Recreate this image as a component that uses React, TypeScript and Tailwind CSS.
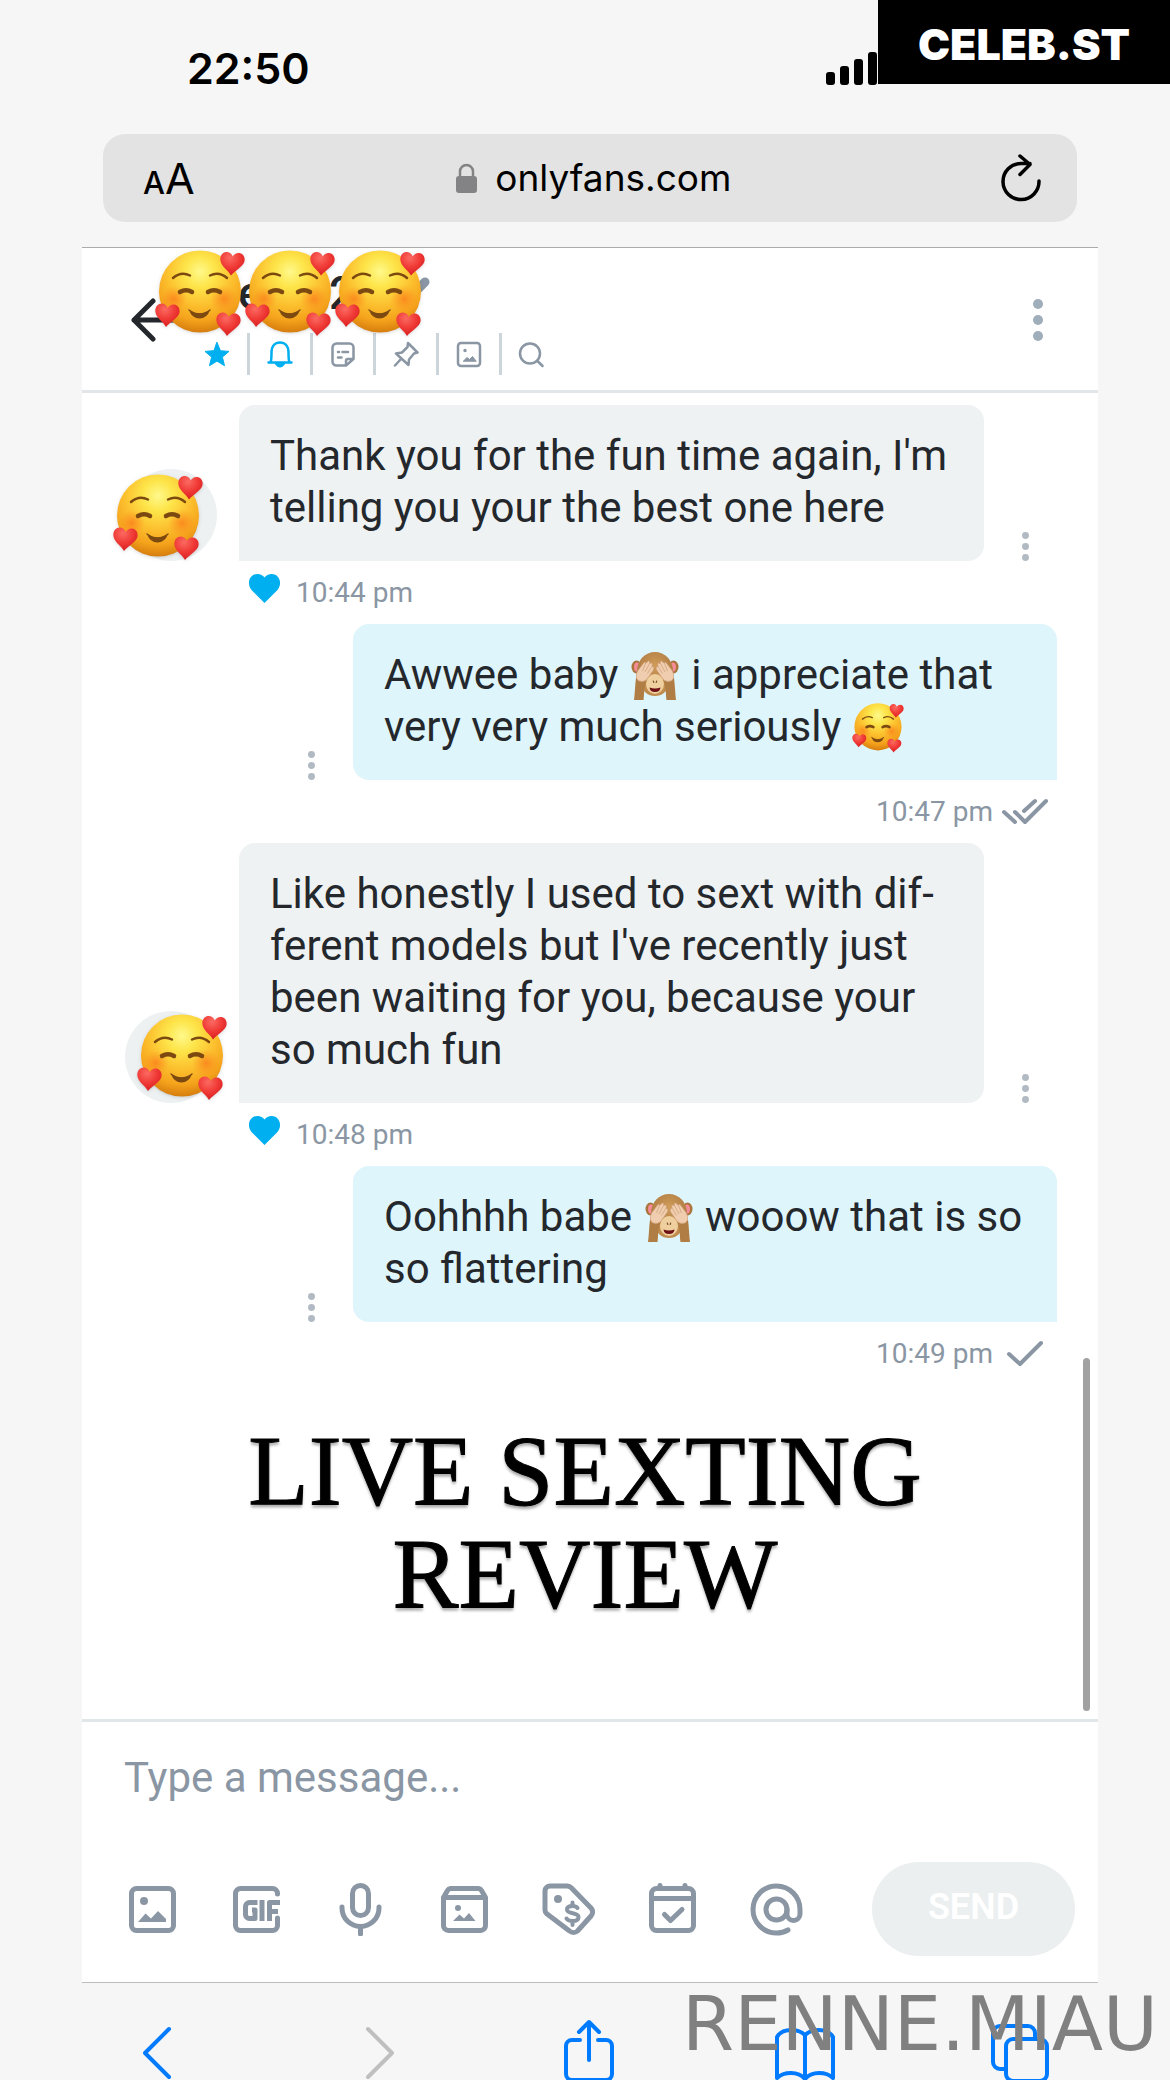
import type { ReactNode } from 'react';

type IconProps = { className?: string };

// === SHARED EMOJI GRADIENTS ===
function EmojiDefs() {
    return (
        <svg className="absolute h-0 w-0" aria-hidden="true">
            <defs>
                <radialGradient id="face" cx="50%" cy="26%" r="74%">
                    <stop offset="0%" stopColor="#fff98c" />
                    <stop offset="25%" stopColor="#fde54a" />
                    <stop offset="55%" stopColor="#fcc02e" />
                    <stop offset="80%" stopColor="#f5a31c" />
                    <stop offset="100%" stopColor="#d67d0e" />
                </radialGradient>
                <radialGradient id="blush">
                    <stop offset="0%" stopColor="#fb7f1c" stopOpacity="0.8" />
                    <stop offset="100%" stopColor="#fb8f20" stopOpacity="0" />
                </radialGradient>
                <radialGradient id="heart" cx="40%" cy="25%" r="75%">
                    <stop offset="0%" stopColor="#fb6a62" />
                    <stop offset="55%" stopColor="#f03a36" />
                    <stop offset="100%" stopColor="#d71f22" />
                </radialGradient>
                <radialGradient id="fur" cx="50%" cy="35%" r="65%">
                    <stop offset="0%" stopColor="#cf9c58" />
                    <stop offset="100%" stopColor="#a87440" />
                </radialGradient>
            </defs>
        </svg>
    );
}

const HEART = 'M11 24.500C8 19 .5 15 .3 8.500C.2 3.500 3.500.7 7.200.9C10 1.100 11.900 3 12.700 5.500C14.200 3 16.500 1.700 19.200 2C23 2.500 25.200 6 24.500 10C23.500 15.500 15.500 19 11 24.500Z';

function LoveFace({ className }: IconProps) {
    return (
        <svg viewBox="0 0 90 87" className={className} role="img" aria-label="smiling face with hearts">
            <circle cx="45" cy="41.500" r="41" fill="url(#face)" />
            <circle cx="19" cy="49" r="13" fill="url(#blush)" />
            <circle cx="69" cy="49" r="14" fill="url(#blush)" />
            <g fill="none" stroke="#7c4a10" strokeLinecap="round">
                <path d="M18 28Q26 21 35 25.500" strokeWidth="2.500" />
                <path d="M55 25.500Q64 21 72 28" strokeWidth="2.500" />
                <path d="M25 42Q31 38.500 37 42" strokeWidth="4.500" />
                <path d="M53 42Q59 38.500 65 42" strokeWidth="4.500" />
                <path d="M34 60Q45 68 55 60" strokeWidth="1.500" />
            </g>
            <path d="M34 60Q45 67 55 60Q52 68.500 44.500 68.500Q37 68.500 34 60Z" fill="#7c4a10" />
            <path d={HEART} fill="url(#heart)" transform="translate(65 1)" />
            <path d={HEART} fill="url(#heart)" transform="translate(0 52.500)" />
            <path d={HEART} fill="url(#heart)" transform="translate(61 61.500)" />
        </svg>
    );
}

function Monkey({ className }: IconProps) {
    return (
        <svg viewBox="0 0 48 50" className={className} role="img" aria-label="see-no-evil monkey">
            <ellipse cx="5.500" cy="16" rx="5" ry="6.500" fill="#a9743a" />
            <ellipse cx="6" cy="16" rx="3" ry="4.500" fill="#f58c98" />
            <ellipse cx="42.500" cy="16" rx="5" ry="6.500" fill="#a9743a" />
            <ellipse cx="42" cy="16" rx="3" ry="4.500" fill="#f58c98" />
            <ellipse cx="24" cy="20" rx="18" ry="19" fill="url(#fur)" />
            <ellipse cx="24" cy="34" rx="13" ry="11" fill="#c08c4d" />
            <ellipse cx="24" cy="33" rx="9" ry="10" fill="#efcf9e" />
            <path d="M18.500 36.500Q24 38.500 29.500 36.500Q29 41 24 41Q19 41 18.500 36.500Z" fill="#6e1216" />
            <path d="M22.300 30l.5 1.500M25.700 30l-.5 1.500" stroke="#7a542c" strokeWidth="1.200" strokeLinecap="round" />
            <path d="M3 49C4 41 4 34 5 27L16 28C12.500 36 13.500 43 12.500 49Z" fill="#b07e45" />
            <path d="M45 49C44 41 44 34 43 27L32 28C35.500 36 34.500 43 35.500 49Z" fill="#b07e45" />
            <g fill="#efcdae" stroke="#cf9f78" strokeWidth="0.700" strokeLinejoin="round">
                <path d="M5.500 27C5 22 6.500 20 8.500 17.500L13 11.500Q14.500 10.500 14.500 12.500L17.500 10Q19.500 9.500 18.500 12.500L20.500 12Q22 12.500 21 15L22.500 16Q23.500 17 22 19.500L17.500 26Q15 30.500 11 30.500Q6.500 30.500 5.500 27Z" />
                <path d="M42.500 27C43 22 41.500 20 39.500 17.500L35 11.500Q33.500 10.500 33.500 12.500L30.500 10Q28.500 9.500 29.500 12.500L27.500 12Q26 12.500 27 15L25.500 16Q24.500 17 26 19.500L30.500 26Q33 30.500 37 30.500Q41.500 30.500 42.500 27Z" />
                <path d="M14.500 12.500L11.500 20M18.500 12.500L14 21M21 15L16.500 22.500M33.500 12.500L36.500 20M29.500 12.500L34 21M27 15L31.500 22.500" fill="none" />
            </g>
        </svg>
    );
}

// === GENERIC ICONS ===
function Dots({ className }: IconProps) {
    return (
        <svg viewBox="0 0 10 42" fill="currentColor" className={className} aria-hidden="true">
            <circle cx="5" cy="5" r="5" />
            <circle cx="5" cy="21" r="5" />
            <circle cx="5" cy="37" r="5" />
        </svg>
    );
}

function LineIcon({ box = '0 0 24 24', width = 2, className, children }: { box?: string; width?: number; className?: string; children: ReactNode }) {
    return (
        <svg
            viewBox={box}
            fill="none"
            stroke="currentColor"
            strokeWidth={width}
            strokeLinecap="round"
            strokeLinejoin="round"
            className={className}
            aria-hidden="true"
        >
            {children}
        </svg>
    );
}

const headerActions = [
    {
        label: 'Favourite',
        active: true,
        icon: <path d="M13 1.500l3.400 8.200 8.600.7-6.600 5.700 2.100 8.600L13 20.100 5.500 24.700l2.100-8.600L1 10.400l8.600-.7z" fill="currentColor" strokeWidth="1" />,
    },
    {
        label: 'Notifications',
        active: true,
        icon: <><path d="M1.500 21.500h23M3.500 21.500c1-2 1-5 1-10C4.500 5 8 1.500 13 1.500s8.500 3.500 8.500 10c0 5 0 8 1 10" /><path d="M9 22.500Q13 28 17 22.500z" /></>,
    },
    {
        label: 'Notes',
        active: false,
        icon: <><path d="M16 24.500H6.500a4 4 0 0 1-4-4v-14a4 4 0 0 1 4-4h13a4 4 0 0 1 4 4V18zM16 24.500V20a2 2 0 0 1 2-2h5.500" /><path d="M8 11h1M12.500 11h5.500M8 16.500h3.500" /></>,
    },
    {
        label: 'Pin',
        active: false,
        icon: <path d="M15 2L24.500 11.500 21 12.500 16 18.500 15.500 24 3 12.500 9 11.500 14.500 6zM8 18L2 24.500" />,
    },
    {
        label: 'Media',
        active: false,
        icon: <><rect x="2" y="2" width="22" height="23" rx="3" /><circle cx="9" cy="9.500" r="1" fill="currentColor" strokeWidth="1.500" /><path d="M7.500 20l3.500-3.500 2.500 2 3-3 3.500 4.500z" fill="currentColor" strokeWidth="1" /></>,
    },
    {
        label: 'Search',
        active: false,
        icon: <><circle cx="12" cy="12.500" r="10" /><path d="M19.500 20l5 5" /></>,
    },
];

const composerActions = [
    {
        label: 'Add image',
        icon: <><rect x="5.500" y="5.500" width="42" height="42" rx="5" /><circle cx="18" cy="18" r="4" fill="currentColor" stroke="none" /><path d="M12 39l7.500-8.500 5.500 5 7-7.500 8 8v3z" fill="currentColor" stroke="none" /></>,
    },
    {
        label: 'Add GIF',
        icon: <><path d="M47.500 11v-.5a5 5 0 0 0-5-5h-32a5 5 0 0 0-5 5v32a5 5 0 0 0 5 5h32a5 5 0 0 0 5-5V35" /><path d="M27.500 19.500h-8a4 4 0 0 0-4 4v8a4 4 0 0 0 4 4H25V27h-3M32 17v21M50 19.500H39.500V38M39.500 28.500H48" strokeWidth="5" strokeLinecap="butt" /></>,
    },
    {
        label: 'Record voice',
        icon: <><rect x="18.500" y="2.500" width="16" height="30" rx="8" /><path d="M8 24v1a18.500 18.500 0 0 0 37 0v-1M26.500 43.500V51" /></>,
    },
    {
        label: 'Add from vault',
        icon: <><path d="M5.500 14.500l4-7a4 4 0 0 1 3-2h28a4 4 0 0 1 3 2l4 7V42a5 5 0 0 1-5 5.500h-32a5 5 0 0 1-5-5.500zM5.500 14.500h42" /><circle cx="20" cy="25" r="3" fill="currentColor" stroke="none" /><path d="M15 38l6.500-6.500 4.500 4 5-5.500 6.500 8z" fill="currentColor" stroke="none" /></>,
    },
    {
        label: 'Set price',
        icon: <><path d="M3 7.500A5 5 0 0 1 8 3h17a6 6 0 0 1 4 1.500L49 25a6 6 0 0 1 0 8L35.500 48a6 6 0 0 1-8 0L4.500 30.500A5 5 0 0 1 3 27z" /><circle cx="16" cy="16" r="4" fill="currentColor" stroke="none" /><path d="M35.500 25q-1.500-2-5-2c-4 0-5.500 1.500-5.500 3.500 0 5 11.500 2.500 11.500 7.500 0 2.500-2 4-6 4q-4.500 0-6-2.500M30.500 19.500V23M30.500 38.500V42" strokeWidth="4" /></>,
    },
    {
        label: 'Schedule',
        icon: <><rect x="5.500" y="5.500" width="42" height="42" rx="5" /><path d="M5.500 15.500h42M14 2.500V5M39 2.500V5" /><path d="M18.500 31.500l6 6L36 26.500" /></>,
    },
    {
        label: 'Mention',
        icon: <><circle cx="26.500" cy="26.500" r="10.500" /><path d="M38 47Q33 50 26.500 50A23.500 23.500 0 1 1 50 26.500V31a6.500 6.500 0 0 1-13 0v-4.500" /></>,
    },
];

// === MESSAGES ===
function Text({ children }: { children: ReactNode }) {
    return <p className="text-[42px] leading-[52px] text-[#24282c]">{children}</p>;
}

const emojiInline = '-my-2 inline-block h-[50px] w-[52px] align-[-4px]';

function Incoming({ time, avatar, children }: { time: string; avatar: string; children: ReactNode }) {
    return (
        <article className="pl-[43px]">
            <div className="flex items-end">
                <div className="relative mr-[22px] h-[92px] w-[92px] shrink-0 rounded-full bg-[#edf1f2]">
                    <LoveFace className={avatar} />
                </div>
                <div className="flex-1 rounded-2xl rounded-bl-none bg-[#eef2f3] pt-[25px] pr-[30px] pb-[27px] pl-[31px]">
                    <Text>{children}</Text>
                </div>
                <button aria-label="Message options" className="flex w-[114px] justify-center pr-[31px]">
                    <Dots className="h-[29px] w-[7px] text-[#b1bac3]" />
                </button>
            </div>
            <div className="flex h-[63px] items-center gap-4 pl-[124px] text-[28px] text-[#8a96a3]">
                <svg viewBox="0 0 31 29" className="-mt-2 h-[29px] w-[31px] fill-[#00aff0]" role="img" aria-label="Liked">
                    <path d="M15.500 29L2.500 16C-3 9 1 0 8.500 0q4.500 0 7 3.500Q18 0 22.500 0C30 0 34 9 28.500 16z" />
                </svg>
                <time>{time}</time>
            </div>
        </article>
    );
}

function Outgoing({ time, read, children }: { time: string; read?: boolean; children: ReactNode }) {
    return (
        <article className="pr-[41px]">
            <div className="flex items-end">
                <button aria-label="Message options" className="flex w-[271px] justify-end pr-[38px]">
                    <Dots className="h-[29px] w-[7px] text-[#b1bac3]" />
                </button>
                <div className="flex-1 rounded-2xl rounded-br-none bg-[#def5fb] pt-[25px] pr-[30px] pb-[27px] pl-[31px]">
                    <Text>{children}</Text>
                </div>
            </div>
            <div className="flex h-[63px] items-center justify-end gap-2 pr-2 text-[28px] text-[#8a96a3]">
                <time>{time}</time>
                <LineIcon box="0 0 48 27" width={4} className="h-[27px] w-12">
                    {read
                        ? <path d="M3 14l11 10M14 14l10 10L45 3M34 3L23 13" />
                        : <path d="M8 14l11 10L40 3" />}
                </LineIcon>
            </div>
        </article>
    );
}

export default function App() {
    return (
        <div className="relative flex h-screen flex-col overflow-hidden bg-[#f6f6f6] pr-[72px] pl-[82px] font-[Roboto,sans-serif]">
            <EmojiDefs />

            {/* Status bar */}
            <div className="flex h-[134px] shrink-0 items-center justify-between pt-[2px] pr-[221px] pl-[105px] font-[Inter,sans-serif]">
                <span className="text-[43px] font-semibold text-black">22:50</span>
                <svg viewBox="0 0 51 33" className="h-[33px] w-[51px] fill-black" role="img" aria-label="Signal">
                    <rect x="0" y="20" width="9" height="13" rx="3" />
                    <rect x="14" y="14" width="9" height="19" rx="3" />
                    <rect x="28" y="7" width="9" height="26" rx="3" />
                    <rect x="42" y="0" width="9" height="33" rx="3" />
                </svg>
            </div>

            {/* Address bar */}
            <div className="mx-[21px] flex h-[88px] shrink-0 items-center justify-between rounded-[22px] bg-[#e3e3e3] pr-9 pl-10 font-[Inter,sans-serif] text-black">
                <button aria-label="Page settings" className="flex items-baseline">
                    <span className="text-[31px] leading-none font-medium">A</span>
                    <span className="text-[43px] leading-none">A</span>
                </button>
                <div className="flex items-center gap-[18px] pr-2">
                    <svg viewBox="0 0 21 30" className="h-[30px] w-[21px]" aria-hidden="true">
                        <path d="M4 14V8.500a6.500 6.500 0 0 1 13 0V14" fill="none" stroke="#838385" strokeWidth="2.500" />
                        <rect x="0" y="13" width="21" height="17" rx="3" fill="#838385" />
                    </svg>
                    <span className="text-[37px]">onlyfans.com</span>
                </div>
                <button aria-label="Reload">
                    <LineIcon box="0 0 40 48" width={3.5} className="h-12 w-10">
                        <path d="M38 27a18 18 0 1 1-18-17.500h9M19 2l10 8.500-10 10" />
                    </LineIcon>
                </button>
            </div>

            <main className="mt-[25px] flex min-h-0 flex-1 flex-col border-t border-[#ababab] bg-white">
                {/* Chat header */}
                <header className="relative flex h-[145px] shrink-0 items-center justify-between border-b-[3px] border-[#e3e6e8] pt-[2px] pr-[55px] pl-[49px]">
                    <div className="flex items-center">
                        <button aria-label="Back">
                            <LineIcon box="0 0 44 44" width={5} className="h-11 w-11 text-[#24282c]">
                                <path d="M22 3L3 22l19 19M3 22h40" />
                            </LineIcon>
                        </button>
                        <div className="flex flex-col gap-3 pl-3">
                            <h1 className="flex items-center pl-[51px] text-[46px] leading-[56px] font-medium text-[#24282c]">
                                <span className="w-[91px]">e</span>
                                <span className="w-[82px]">2</span>
                                <LineIcon box="0 0 24 24" width={9} className="mb-3 h-6 w-6 text-[#8a96a3]">
                                    <path d="M4 17L14 7" />
                                </LineIcon>
                            </h1>
                            <div className="flex divide-x-3 divide-[#ccd5da]">
                                {headerActions.map((action) => (
                                    <button
                                        key={action.label}
                                        aria-label={action.label}
                                        className={`flex h-[42px] w-[63px] items-center justify-center last:w-[57px] ${action.active ? 'text-[#00aff0]' : 'text-[#8a96a3]'}`}
                                    >
                                        <LineIcon box="0 0 26 27" width={2.5} className="h-[27px] w-[26px]">{action.icon}</LineIcon>
                                    </button>
                                ))}
                            </div>
                        </div>
                    </div>
                    <button aria-label="Chat options">
                        <Dots className="h-[42px] w-[10px] text-[#a0adba]" />
                    </button>
                    <div className="absolute top-[2px] left-[73px] flex drop-shadow">
                        <LoveFace className="h-[87px] w-[90px]" />
                        <LoveFace className="h-[87px] w-[90px]" />
                        <LoveFace className="h-[87px] w-[90px]" />
                    </div>
                </header>

                {/* Conversation */}
                <section className="relative min-h-0 flex-1 pt-3">
                    <Incoming time="10:44 pm" avatar="absolute top-[5px] -left-3 h-[87px] w-[90px] max-w-none drop-shadow">
                        Thank you for the fun time again, I'm telling you your the best one here
                    </Incoming>
                    <Outgoing time="10:47 pm" read>
                        Awwee baby <Monkey className={emojiInline} /> i appreciate that very very much seriously <LoveFace className={emojiInline} />
                    </Outgoing>
                    <Incoming time="10:48 pm" avatar="absolute top-[3px] left-3 h-[87px] w-[90px] max-w-none drop-shadow">
                        Like honestly I used to sext with dif&shy;ferent models but I've recently just been waiting for you, because your so much fun
                    </Incoming>
                    <Outgoing time="10:49 pm">
                        Oohhhh babe <Monkey className={emojiInline} /> wooow that is so so flattering
                    </Outgoing>
                    <h2 className="mt-[34px] pr-[10px] text-center font-['Liberation_Serif',serif] text-[99px] leading-[103px] text-black text-shadow-[0_3px_3px_rgb(0_0_0/0.35)] [-webkit-text-stroke:1px_black]">
                        LIVE SEXTING
                        <br />
                        REVIEW
                    </h2>
                    <div className="absolute right-2 bottom-2 h-[353px] w-[7px] rounded-full bg-[#a1a1a1]" />
                </section>

                {/* Composer */}
                <form className="shrink-0 border-t-[3px] border-[#e1e6e8]" onSubmit={(e) => e.preventDefault()}>
                    <input
                        type="text"
                        aria-label="Message"
                        placeholder="Type a message..."
                        className="block w-full px-[42px] pt-[30px] pb-[58px] text-[42px] leading-[52px] text-[#24282c] outline-none placeholder:text-[#8a96a3]"
                    />
                    <div className="flex items-center justify-between pr-[23px] pb-[26px] pl-[44px]">
                        <div className="flex gap-[51px] text-[#8a96a3]">
                            {composerActions.map((action) => (
                                <button key={action.label} type="button" aria-label={action.label}>
                                    <LineIcon box="0 0 53 53" width={5} className="h-[53px] w-[53px]">{action.icon}</LineIcon>
                                </button>
                            ))}
                        </div>
                        <button type="submit" className="h-[94px] w-[203px] rounded-full bg-[#ebeff0] pb-1 text-4xl font-semibold text-white">
                            SEND
                        </button>
                    </div>
                </form>
            </main>

            {/* Browser toolbar */}
            <nav className="flex h-[98px] shrink-0 items-start justify-between border-t border-[#bdbdbd] pt-[34px] pr-[47px] pl-[45px] text-[#007aff]">
                <button aria-label="Previous page" className="flex w-[62px] justify-center">
                    <LineIcon box="0 0 31 70" width={4} className="h-[70px] w-[31px]"><path d="M26 12L2 36l24 24" /></LineIcon>
                </button>
                <button aria-label="Next page" className="flex w-[62px] justify-end text-[#bfbfbf]">
                    <LineIcon box="0 0 31 70" width={4} className="mr-[9px] h-[70px] w-[31px]"><path d="M3 12l24 24L3 60" /></LineIcon>
                </button>
                <button aria-label="Share" className="flex w-[62px] justify-center">
                    <LineIcon box="0 0 52 70" width={4} className="h-[70px] w-[52px]">
                        <path d="M17 23H9a6 6 0 0 0-6 6v28a6 6 0 0 0 6 6h34a6 6 0 0 0 6-6V29a6 6 0 0 0-6-6h-8M26 43V5M16 15L26 5l10 10" />
                    </LineIcon>
                </button>
                <button aria-label="Bookmarks" className="flex w-[62px] justify-center">
                    <LineIcon box="0 0 62 70" width={4} className="h-[70px] w-[62px]">
                        <path d="M31 18q-5-5-14-5-10 0-14 7v41q5-5 14-5t14 6q5-6 14-6t14 5V20q-4-7-14-7-9 0-14 5zM31 18v44" />
                    </LineIcon>
                </button>
                <button aria-label="Tabs" className="flex w-[62px] justify-center">
                    <LineIcon box="0 0 60 70" width={4} className="h-[70px] w-[60px]">
                        <rect x="16" y="22" width="41" height="42" rx="7" />
                        <path d="M16 52h-6a7 7 0 0 1-7-7V16a7 7 0 0 1 7-7h28a7 7 0 0 1 7 7v6" />
                    </LineIcon>
                </button>
            </nav>

            {/* Overlays */}
            <div className="absolute top-0 right-0 flex h-[84px] w-[292px] items-center justify-center bg-black pt-1 font-[Inter,sans-serif] text-[43px] font-black text-white">
                CELEB.ST
            </div>
            <div className="absolute right-3 bottom-[11px] font-['DejaVu_Sans',sans-serif] text-[75px] leading-[90px] text-[#808080]">
                RENNE.MIAU
            </div>
        </div>
    );
}
